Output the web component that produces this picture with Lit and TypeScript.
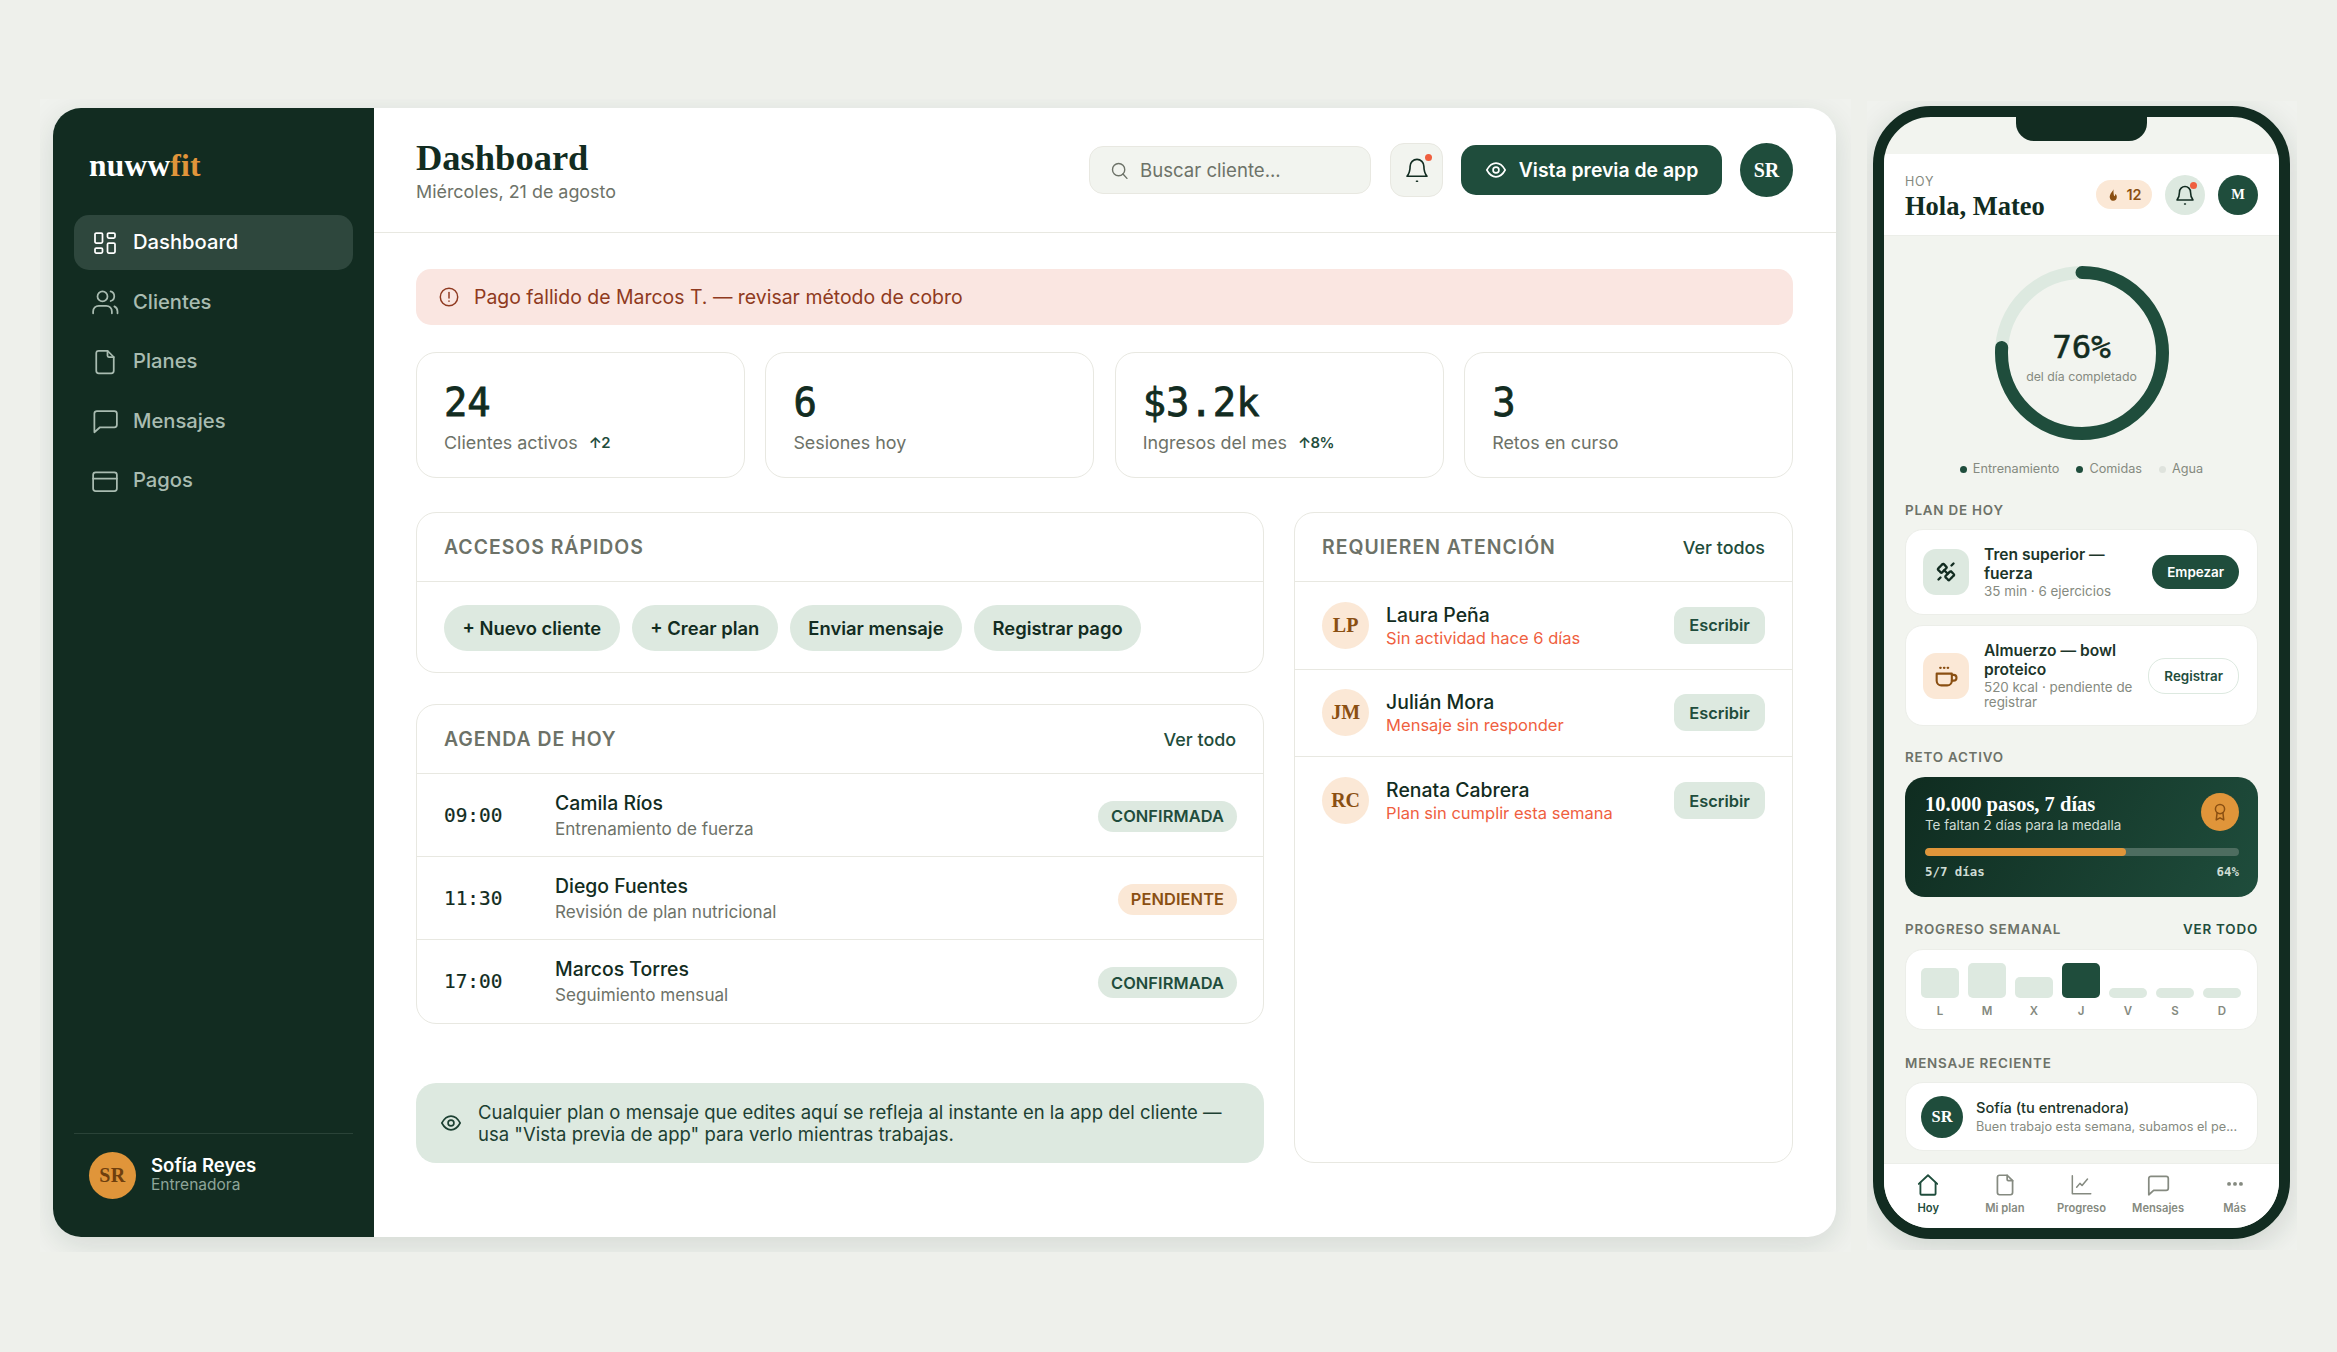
import { LitElement, html, css, svg } from 'lit';
import { customElement } from 'lit/decorators.js';

const SERIF = css`'Liberation Serif', serif`;
const MONO = css`'DejaVu Sans Mono', monospace`;

const icons = {
  dashboard: svg`<path d="M5 4h4a1 1 0 0 1 1 1v6a1 1 0 0 1-1 1H5a1 1 0 0 1-1-1V5a1 1 0 0 1 1-1"/><path d="M5 16h4a1 1 0 0 1 1 1v2a1 1 0 0 1-1 1H5a1 1 0 0 1-1-1v-2a1 1 0 0 1 1-1"/><path d="M15 12h4a1 1 0 0 1 1 1v6a1 1 0 0 1-1 1h-4a1 1 0 0 1-1-1v-6a1 1 0 0 1 1-1"/><path d="M15 4h4a1 1 0 0 1 1 1v2a1 1 0 0 1-1 1h-4a1 1 0 0 1-1-1V5a1 1 0 0 1 1-1"/>`,
  users: svg`<circle cx="10" cy="7.5" r="4"/><path d="M2.5 21v-1.5a4.5 4.5 0 0 1 4.5-4.5h6a4.5 4.5 0 0 1 4.5 4.5V21"/><path d="M16.5 3.5a4 4 0 0 1 0 7.7"/><path d="M22 21v-1.5a4.5 4.5 0 0 0-2.5-4"/>`,
  file: svg`<path d="M14 3v4a1 1 0 0 0 1 1h4"/><path d="M17 21H7a2 2 0 0 1-2-2V5a2 2 0 0 1 2-2h7l5 5v11a2 2 0 0 1-2 2z"/>`,
  message: svg`<path d="M3.5 21V6a2 2 0 0 1 2-2h14a2 2 0 0 1 2 2v9a2 2 0 0 1-2 2H8z"/>`,
  card: svg`<rect x="2.5" y="5" width="19" height="15" rx="2"/><path d="M2.5 10h19"/>`,
  search: svg`<circle cx="11" cy="11" r="7"/><path d="m20.5 21-4.500-5"/>`,
  bell: svg`<path d="M12 3.500a5.500 5.500 0 0 0-5.500 5.500c0 5-2.500 8-2.500 8h16s-2.500-3-2.500-8A5.500 5.500 0 0 0 12 3.500z"/><path d="M11.600 21h.8"/>`,
  eye: svg`<path d="M2 12c2.500-4.600 6-7.500 10-7.500s7.500 2.900 10 7.500c-2.500 4.600-6 7.500-10 7.500S4.500 16.600 2 12z"/><circle cx="12" cy="12" r="3.200"/>`,
  alert: svg`<circle cx="12" cy="12" r="9.500"/><path d="M12 7v6"/><path d="M12 16.400v.2"/>`,
  dumbbell: svg`<g transform="rotate(45 12 12)"><rect x="4" y="8" width="5.500" height="8" rx="1" stroke-dasharray="2.600 1"/><rect x="14.500" y="8" width="5.500" height="8" rx="1" stroke-dasharray="2.600 1"/><path d="M9.500 12h5"/></g><path d="M17.500 5.500l2-2M4.500 19.500l2-2"/>`,
  cup: svg`<path d="M4 10h13v6a4 4 0 0 1-4 4H8a4 4 0 0 1-4-4z"/><path d="M17 11h1.500a2.500 2.500 0 0 1 0 5H17"/><path d="M7 5h.5M10.200 5h.5M13.400 5h.5"/>`,
  medal: svg`<circle cx="12" cy="8.500" r="5.500"/><path d="M8.500 13l-1 8.500 4.500-2.500 4.500 2.500-1-8.500"/>`,
  home: svg`<path d="M3.500 11 12 3l8.500 8"/><path d="M5 9.800V20a1 1 0 0 0 1 1h12a1 1 0 0 0 1-1V9.800"/>`,
  chart: svg`<path d="M4 3.500V20h17"/><path d="m8 14 3-3.500 2 2 5-6"/>`,
};

function icon(name: keyof typeof icons, size: number, width = 1.8) {
  return html`<svg
    width=${size}
    height=${size}
    viewBox="0 0 24 24"
    fill="none"
    stroke="currentColor"
    stroke-width=${width}
    stroke-linecap="round"
    stroke-linejoin="round"
  >${icons[name]}</svg>`;
}

@customElement('dash-window')
class DashWindow extends LitElement {
  static styles = css`
    :host {
      display: flex;
      width: 1783px;
      height: 1129px;
      box-sizing: border-box;
      background: #fff;
      border-radius: 28px;
      overflow: hidden;
      color: #122c21;
      font-family: Inter, sans-serif;
      box-shadow: 0 8px 32px rgba(18, 44, 33, 0.13);
    }

    * {
      box-sizing: border-box;
    }

    svg {
      display: block;
      flex: none;
    }

    .side {
      width: 321px;
      flex: none;
      background: #122c21;
      display: flex;
      flex-direction: column;
      padding: 0 21px;
    }

    .logo {
      font: 700 31.500px/40px ${SERIF};
      color: #fff;
      margin: 38px 0 29px 15px;
      letter-spacing: 0.2px;
    }

    .logo span {
      color: #e0953a;
    }

    .nav {
      display: flex;
      flex-direction: column;
      gap: 4.600px;
      flex: 1;
    }

    .nav__item {
      display: flex;
      align-items: center;
      gap: 13.500px;
      height: 55px;
      padding-left: 15.500px;
      border-radius: 15px;
      font-size: 20.200px;
      font-weight: 500;
      color: #a9bcb1;
    }

    .nav__item span {
      padding-bottom: 2px;
    }

    .nav__item--active {
      background: #2e473d;
      color: #fff;
    }

    .coach {
      border-top: 1px solid #2a4338;
      display: flex;
      align-items: center;
      gap: 15px;
      padding: 18px 15px 38px;
    }

    .coach__avatar {
      width: 47px;
      height: 47px;
      border-radius: 50%;
      background: #e0953a;
      color: #6f3f0e;
      display: flex;
      align-items: center;
      justify-content: center;
      font: 700 20px ${SERIF};
      letter-spacing: 0.5px;
    }

    .coach__text {
      padding-bottom: 3px;
    }

    .coach__name {
      font-size: 18.600px;
      line-height: 22px;
      font-weight: 600;
      color: #fff;
    }

    .coach__role {
      font-size: 15.500px;
      line-height: 18px;
      color: #8ea599;
    }

    .main {
      flex: 1;
      min-width: 0;
      display: flex;
      flex-direction: column;
    }

    .top {
      height: 125px;
      flex: none;
      display: flex;
      align-items: center;
      padding: 0 43px 0 42px;
      border-bottom: 1px solid #e8e8e1;
    }

    .top__title {
      flex: 1;
    }

    h1 {
      margin: 0;
      font: 700 36.500px/44px ${SERIF};
      color: #122c21;
    }

    .top__date {
      font-size: 17.900px;
      line-height: 24px;
      color: #6d7268;
    }

    .search {
      width: 282px;
      height: 48px;
      border: 1px solid #e8e8e1;
      border-radius: 14px;
      background: #f2f4ef;
      display: flex;
      align-items: center;
      gap: 10px;
      padding-left: 19px;
      font-size: 18.600px;
      color: #6d7268;
      margin-right: 19px;
    }

    .bell {
      position: relative;
      width: 53px;
      height: 54px;
      border: 1px solid #e8e8e1;
      border-radius: 14px;
      background: #f2f4ef;
      display: flex;
      align-items: center;
      justify-content: center;
      margin-right: 18px;
    }

    .bell__dot {
      position: absolute;
      top: 10px;
      right: 10px;
      width: 7px;
      height: 7px;
      border-radius: 50%;
      background: #ef5f3f;
    }

    .preview {
      width: 261px;
      height: 50px;
      border-radius: 15px;
      background: #1f4d3c;
      color: #fff;
      display: flex;
      align-items: center;
      justify-content: center;
      gap: 12px;
      font-size: 19.400px;
      font-weight: 600;
      margin-right: 18px;
    }

    .me {
      width: 53px;
      height: 54px;
      border-radius: 50%;
      background: #1f4d3c;
      color: #fff;
      display: flex;
      align-items: center;
      justify-content: center;
      font: 700 20px ${SERIF};
    }

    .content {
      flex: 1;
      min-height: 0;
      display: flex;
      flex-direction: column;
      padding: 36px 43px 74px 42px;
    }

    .alert {
      height: 56px;
      flex: none;
      border-radius: 15px;
      background: #fae6e1;
      color: #8f3a20;
      display: flex;
      align-items: center;
      gap: 14px;
      padding-left: 22px;
      font-size: 19.450px;
    }

    .stats {
      display: grid;
      grid-template-columns: repeat(4, 1fr);
      gap: 20.500px;
      margin-top: 27px;
      flex: none;
    }

    .stat {
      height: 126px;
      border: 1px solid #e8e8e1;
      border-radius: 20px;
      padding: 26px 27px 0;
    }

    .stat__value {
      font: 400 38.800px/48px ${MONO};
      -webkit-text-stroke: 0.8px currentColor;
      color: #122c21;
    }

    .stat__label {
      display: flex;
      align-items: center;
      gap: 11px;
      margin-top: 3.500px;
      font-size: 17.900px;
      line-height: 24px;
      color: #6d7268;
    }

    .stat__delta {
      font-size: 14.900px;
      font-weight: 600;
      letter-spacing: -0.5px;
      color: #1f4d3c;
    }

    .columns {
      flex: 1;
      min-height: 0;
      margin-top: 34px;
      display: grid;
      grid-template-columns: 1.7fr 1fr;
      gap: 30px;
    }

    .left {
      display: flex;
      flex-direction: column;
    }

    .panel {
      border: 1px solid #e8e8e1;
      border-radius: 20px;
      flex: none;
    }

    .panel__head {
      height: 69px;
      display: flex;
      align-items: center;
      justify-content: space-between;
      padding: 0 27px;
      border-bottom: 1px solid #e8e8e1;
    }

    .panel__title {
      font-size: 19.400px;
      font-weight: 600;
      letter-spacing: 1px;
      color: #6d7268;
    }

    .panel__link {
      font-size: 17.900px;
      font-weight: 500;
      color: #1f4d3c;
    }

    .chips {
      display: flex;
      gap: 12px;
      padding: 23px 27px 21px;
    }

    .chip {
      height: 46px;
      padding: 0 18.500px;
      border-radius: 23px;
      background: #dde9e0;
      display: flex;
      align-items: center;
      font-size: 18.400px;
      font-weight: 600;
      color: #122c21;
    }

    .agenda {
      margin-top: 31px;
    }

    .slot {
      height: 83px;
      display: flex;
      align-items: center;
      padding: 0 26px 0 27px;
      border-bottom: 1px solid #e8e8e1;
    }

    .slot:last-child {
      border-bottom: 0;
    }

    .slot__time {
      width: 111px;
      flex: none;
      font: 400 19.400px ${MONO};
      -webkit-text-stroke: 0.2px currentColor;
      color: #122c21;
    }

    .slot__body {
      flex: 1;
      padding-top: 1px;
    }

    .slot__name {
      font-size: 19.400px;
      line-height: 25px;
      font-weight: 500;
      color: #122c21;
    }

    .slot__type {
      font-size: 17.100px;
      line-height: 25px;
      color: #6d7268;
    }

    .badge {
      height: 31px;
      margin-top: 2px;
      display: flex;
      align-items: center;
      padding: 0 13px;
      border-radius: 16px;
      font-size: 16.400px;
      font-weight: 600;
      letter-spacing: 0.1px;
      background: #dde9e0;
      color: #1f4d3c;
    }

    .badge--wait {
      background: #fbe8d6;
      color: #8a4f12;
    }

    .hint {
      margin-top: auto;
      height: 80px;
      flex: none;
      border-radius: 20px;
      background: #dde9e0;
      display: flex;
      align-items: center;
      gap: 16px;
      padding: 0 24px;
      font-size: 18.500px;
      line-height: 22.500px;
      color: #1c4032;
    }

    .right {
      height: 100%;
    }

    .person {
      height: 87.500px;
      display: flex;
      align-items: center;
      padding: 0 27px;
      border-bottom: 1px solid #e8e8e1;
    }

    .person:last-child {
      border-bottom: 0;
    }

    .person__avatar {
      width: 47px;
      height: 47px;
      flex: none;
      border-radius: 50%;
      background: #fbe8d6;
      color: #8a4f12;
      display: flex;
      align-items: center;
      justify-content: center;
      font: 700 20px ${SERIF};
      margin-right: 17px;
    }

    .person__body {
      flex: 1;
      padding-top: 3px;
    }

    .person__name {
      font-size: 19.400px;
      line-height: 23px;
      font-weight: 500;
      color: #122c21;
    }

    .person__note {
      font-size: 16.500px;
      line-height: 23px;
      color: #ef5f3f;
    }

    .write {
      width: 91px;
      height: 37px;
      border-radius: 12px;
      background: #dde9e0;
      color: #1f4d3c;
      display: flex;
      align-items: center;
      justify-content: center;
      font-size: 16.400px;
      font-weight: 600;
    }
  `;

  render() {
    const nav: [keyof typeof icons, string][] = [
      ['dashboard', 'Dashboard'],
      ['users', 'Clientes'],
      ['file', 'Planes'],
      ['message', 'Mensajes'],
      ['card', 'Pagos'],
    ];
    const stats = [
      ['24', 'Clientes activos', '↑2'],
      ['6', 'Sesiones hoy', ''],
      ['$3.2k', 'Ingresos del mes', '↑8%'],
      ['3', 'Retos en curso', ''],
    ];
    const slots = [
      ['09:00', 'Camila Ríos', 'Entrenamiento de fuerza', 'CONFIRMADA'],
      ['11:30', 'Diego Fuentes', 'Revisión de plan nutricional', 'PENDIENTE'],
      ['17:00', 'Marcos Torres', 'Seguimiento mensual', 'CONFIRMADA'],
    ];
    const people = [
      ['LP', 'Laura Peña', 'Sin actividad hace 6 días'],
      ['JM', 'Julián Mora', 'Mensaje sin responder'],
      ['RC', 'Renata Cabrera', 'Plan sin cumplir esta semana'],
    ];

    return html`
      <aside class="side">
        <div class="logo">nuww<span>fit</span></div>
        <nav class="nav">
          ${nav.map(
            ([name, label], i) => html`
              <div class="nav__item ${i === 0 ? 'nav__item--active' : ''}">${icon(name, 30, 1.4)}<span>${label}</span></div>
            `,
          )}
        </nav>
        <div class="coach">
          <div class="coach__avatar">SR</div>
          <div class="coach__text">
            <div class="coach__name">Sofía Reyes</div>
            <div class="coach__role">Entrenadora</div>
          </div>
        </div>
      </aside>
      <div class="main">
        <header class="top">
          <div class="top__title">
            <h1>Dashboard</h1>
            <div class="top__date">Miércoles, 21 de agosto</div>
          </div>
          <div class="search">${icon('search', 21, 1.6)}Buscar cliente...</div>
          <div class="bell">${icon('bell', 30, 1.3)}<span class="bell__dot"></span></div>
          <div class="preview">${icon('eye', 22)}Vista previa de app</div>
          <div class="me">SR</div>
        </header>
        <div class="content">
          <div class="alert">${icon('alert', 22, 1.6)}Pago fallido de Marcos T. — revisar método de cobro</div>
          <div class="stats">
            ${stats.map(
              ([value, label, delta]) => html`
                <div class="stat">
                  <div class="stat__value">${value}</div>
                  <div class="stat__label">${label}${delta ? html`<span class="stat__delta">${delta}</span>` : ''}</div>
                </div>
              `,
            )}
          </div>
          <div class="columns">
            <div class="left">
              <section class="panel">
                <div class="panel__head"><span class="panel__title">ACCESOS RÁPIDOS</span></div>
                <div class="chips">
                  ${['+ Nuevo cliente', '+ Crear plan', 'Enviar mensaje', 'Registrar pago'].map(
                    (c) => html`<span class="chip">${c}</span>`,
                  )}
                </div>
              </section>
              <section class="panel agenda">
                <div class="panel__head">
                  <span class="panel__title">AGENDA DE HOY</span><span class="panel__link">Ver todo</span>
                </div>
                ${slots.map(
                  ([time, name, type, status]) => html`
                    <div class="slot">
                      <div class="slot__time">${time}</div>
                      <div class="slot__body">
                        <div class="slot__name">${name}</div>
                        <div class="slot__type">${type}</div>
                      </div>
                      <span class="badge ${status === 'PENDIENTE' ? 'badge--wait' : ''}">${status}</span>
                    </div>
                  `,
                )}
              </section>
              <div class="hint">
                ${icon('eye', 22)}
                <div>
                  Cualquier plan o mensaje que edites aquí se refleja al instante en la app del cliente — usa "Vista
                  previa de app" para verlo mientras trabajas.
                </div>
              </div>
            </div>
            <section class="panel right">
              <div class="panel__head">
                <span class="panel__title">REQUIEREN ATENCIÓN</span><span class="panel__link">Ver todos</span>
              </div>
              ${people.map(
                ([initials, name, note]) => html`
                  <div class="person">
                    <div class="person__avatar">${initials}</div>
                    <div class="person__body">
                      <div class="person__name">${name}</div>
                      <div class="person__note">${note}</div>
                    </div>
                    <div class="write">Escribir</div>
                  </div>
                `,
              )}
            </section>
          </div>
        </div>
      </div>
    `;
  }
}

@customElement('phone-preview')
class PhonePreview extends LitElement {
  static styles = css`
    :host {
      display: block;
      position: relative;
      width: 417px;
      height: 1133px;
      box-sizing: border-box;
      border: 11px solid #122c21;
      border-radius: 58px;
      background: #f2f4ef;
      overflow: hidden;
      color: #122c21;
      font-family: Inter, sans-serif;
      box-shadow: 0 8px 32px rgba(18, 44, 33, 0.16);
    }

    * {
      box-sizing: border-box;
    }

    svg {
      display: block;
      flex: none;
    }

    .screen {
      height: 100%;
      display: flex;
      flex-direction: column;
    }

    .notch {
      position: absolute;
      top: 0;
      left: 132px;
      width: 131px;
      height: 24px;
      background: #122c21;
      border-radius: 0 0 18px 18px;
    }

    .bar {
      height: 82px;
      flex: none;
      margin-top: 37px;
      background: #fff;
      border-bottom: 1px solid #eceee9;
      display: flex;
      align-items: center;
      padding: 0 21px;
    }

    .bar__hello {
      flex: 1;
      padding-top: 7px;
    }

    .bar__day {
      font-size: 12.500px;
      line-height: 15px;
      letter-spacing: 0.8px;
      color: #858a80;
    }

    .bar__name {
      font: 700 26.500px/31px ${SERIF};
      margin-top: 2px;
      color: #122c21;
    }

    .streak {
      width: 56px;
      height: 29px;
      border-radius: 15px;
      background: #fbe8d6;
      color: #8a4f12;
      display: flex;
      align-items: center;
      justify-content: center;
      gap: 6px;
      font-size: 14.400px;
      font-weight: 600;
      margin-right: 13px;
    }

    .bar__bell {
      position: relative;
      width: 40px;
      height: 40px;
      border-radius: 50%;
      background: #dde9e0;
      display: flex;
      align-items: center;
      justify-content: center;
      margin-right: 13px;
    }

    .bar__dot {
      position: absolute;
      top: 7px;
      right: 8px;
      width: 7px;
      height: 7px;
      border-radius: 50%;
      background: #ef5f3f;
    }

    .bar__me,
    .msg__avatar {
      border-radius: 50%;
      background: #1f4d3c;
      color: #fff;
      display: flex;
      align-items: center;
      justify-content: center;
      flex: none;
      font-family: ${SERIF};
      font-weight: 700;
    }

    .bar__me {
      width: 40px;
      height: 40px;
      font-size: 14.400px;
    }

    .body {
      flex: 1;
      min-height: 0;
      overflow: hidden;
      padding: 30px 21px 0 21px;
    }

    .ring {
      position: relative;
      width: 174px;
      height: 174px;
      margin: 0 auto;
    }

    .ring__text {
      position: absolute;
      inset: 0;
      padding-top: 6px;
      display: flex;
      flex-direction: column;
      align-items: center;
      justify-content: center;
    }

    .ring__value {
      font: 400 32.500px/38px ${MONO};
      -webkit-text-stroke: 0.5px currentColor;
      color: #122c21;
    }

    .ring__label {
      font-size: 12.300px;
      line-height: 17px;
      margin-top: 2px;
      color: #858a80;
    }

    .legend {
      display: flex;
      justify-content: center;
      gap: 17px;
      margin-top: 21px;
      font-size: 12.700px;
      line-height: 16px;
      color: #858a80;
    }

    .legend span {
      display: flex;
      align-items: center;
      gap: 6px;
    }

    .legend i {
      width: 7px;
      height: 7px;
      border-radius: 50%;
      background: #1f4d3c;
    }

    .legend i.off {
      background: #dfe3dd;
    }

    .label {
      display: flex;
      justify-content: space-between;
      height: 18px;
      align-items: center;
      font-size: 13.400px;
      font-weight: 600;
      letter-spacing: 0.8px;
      color: #6d7268;
      margin-bottom: 11px;
    }

    .label--plan {
      margin-top: 24px;
      margin-bottom: 10px;
    }

    .label--top {
      margin-top: 22px;
    }

    .label--msg {
      margin-bottom: 10px;
    }

    .label a {
      color: #1f4d3c;
    }

    .card {
      background: #fff;
      border: 1px solid #eceee9;
      border-radius: 18px;
    }

    .plan {
      display: flex;
      align-items: center;
      padding: 15px 18px 15px 17px;
      margin-bottom: 10px;
    }

    .plan__icon {
      width: 46px;
      height: 46px;
      flex: none;
      border-radius: 13px;
      display: flex;
      align-items: center;
      justify-content: center;
      background: #dde9e0;
      color: #122c21;
      margin-right: 15px;
    }

    .plan__icon--food {
      background: #fbe8d6;
      color: #8a4f12;
    }

    .plan__text {
      flex: 1;
      min-width: 0;
      margin-right: 12px;
    }

    .plan__title {
      font-size: 15.600px;
      line-height: 19px;
      font-weight: 600;
      color: #1c3529;
    }

    .plan__sub {
      font-size: 13.400px;
      line-height: 15px;
      margin-top: 1px;
      color: #858a80;
    }

    .btn {
      flex: none;
      height: 34px;
      padding: 0 15px;
      border-radius: 17px;
      background: #1f4d3c;
      color: #fff;
      display: flex;
      align-items: center;
      font-size: 13.400px;
      font-weight: 600;
    }

    .btn--ghost {
      height: 36px;
      background: #fff;
      border: 1px solid #dde9e0;
      color: #1f4d3c;
    }

    .challenge {
      height: 120px;
      border-radius: 20px;
      background: linear-gradient(120deg, #0f2c20, #1f4d3c);
      color: #fff;
      padding: 15px 19px 0 20px;
      margin-bottom: 23px;
    }

    .challenge__row {
      display: flex;
      justify-content: space-between;
    }

    .challenge__title {
      font: 700 20.500px/24px ${SERIF};
    }

    .challenge__sub {
      font-size: 13.400px;
      line-height: 17px;
      margin-top: 1px;
      color: #cfdcd4;
    }

    .medal {
      width: 38px;
      height: 38px;
      margin-top: 1px;
      border-radius: 50%;
      background: #e0953a;
      color: #8a4f12;
      display: flex;
      align-items: center;
      justify-content: center;
    }

    .track {
      height: 8px;
      margin-top: 14px;
      border-radius: 4px;
      background: #4e6d60;
      overflow: hidden;
    }

    .track div {
      height: 100%;
      border-radius: 4px;
      background: #e0953a;
    }

    .challenge__foot {
      display: flex;
      justify-content: space-between;
      margin-top: 8px;
      font: 700 12.400px/16px ${MONO};
      color: #cfdcd4;
    }

    .week {
      display: flex;
      gap: 9px;
      padding: 13px 15px 11px;
      margin-bottom: 24px;
    }

    .day {
      width: 38px;
      display: flex;
      flex-direction: column;
      align-items: stretch;
    }

    .day__slot {
      height: 35px;
      display: flex;
      align-items: flex-end;
    }

    .day__bar {
      width: 100%;
      background: #dde9e0;
      border-radius: 5px;
    }

    .day__bar--on {
      background: #1f4d3c;
    }

    .day__name {
      margin-top: 6px;
      text-align: center;
      font-size: 11.500px;
      line-height: 14px;
      font-weight: 600;
      color: #858a80;
    }

    .msg {
      height: 69px;
      display: flex;
      align-items: center;
      gap: 13px;
      padding: 0 15px;
    }

    .msg__avatar {
      width: 42px;
      height: 42px;
      font-size: 16.400px;
    }

    .msg__body {
      flex: 1;
      min-width: 0;
    }

    .msg__name {
      font-size: 14.600px;
      line-height: 19px;
      font-weight: 500;
      color: #1c3529;
    }

    .msg__text {
      font-size: 12.700px;
      line-height: 17px;
      color: #858a80;
      white-space: nowrap;
    }

    .tabs {
      height: 65px;
      flex: none;
      background: #fff;
      border-top: 1px solid #eceee9;
      display: grid;
      grid-template-columns: repeat(5, 1fr);
      padding: 0 6px;
    }

    .tab {
      display: flex;
      flex-direction: column;
      align-items: center;
      padding-top: 8px;
      gap: 2px;
      font-size: 11.200px;
      line-height: 16px;
      font-weight: 600;
      color: #858a80;
    }

    .tab--on {
      color: #1f4d3c;
    }
  `;

  render() {
    const r = 80.5;
    const len = 2 * Math.PI * r;
    const bars = [
      ['L', 30],
      ['M', 35],
      ['X', 21],
      ['J', 35],
      ['V', 10],
      ['S', 10],
      ['D', 10],
    ] as const;

    return html`
      <div class="screen">
        <div class="bar">
          <div class="bar__hello">
            <div class="bar__day">HOY</div>
            <div class="bar__name">Hola, Mateo</div>
          </div>
          <div class="streak">
            <svg width="14" height="14" viewBox="0 0 24 24" fill="currentColor">
              <path d="M13 2c-.5 3-5.500 6-6.500 11.500C5.800 18.500 9 22 12.500 22s6.500-3 6-7.500c-.3-2-1.500-3.500-2.500-4.500.2 2-.5 3.500-2 4-1-3.500-1.500-8-1-12z" />
            </svg>
            12
          </div>
          <div class="bar__bell">${icon('bell', 24, 1.6)}<span class="bar__dot"></span></div>
          <div class="bar__me">M</div>
        </div>
        <div class="body">
          <div class="ring">
            <svg width="174" height="174" viewBox="0 0 174 174" fill="none" stroke-width="13">
              <circle cx="87" cy="87" r=${r} stroke="#dde9e0" />
              <circle
                cx="87"
                cy="87"
                r=${r}
                stroke="#1f4d3c"
                stroke-linecap="round"
                stroke-dasharray="${len * 0.76} ${len}"
                transform="rotate(-90 87 87)"
              />
            </svg>
            <div class="ring__text">
              <div class="ring__value">76%</div>
              <div class="ring__label">del día completado</div>
            </div>
          </div>
          <div class="legend">
            <span><i></i>Entrenamiento</span>
            <span><i></i>Comidas</span>
            <span><i class="off"></i>Agua</span>
          </div>

          <div class="label label--plan">PLAN DE HOY</div>
          <div class="card plan">
            <div class="plan__icon">${icon('dumbbell', 24, 2.4)}</div>
            <div class="plan__text">
              <div class="plan__title">Tren superior — fuerza</div>
              <div class="plan__sub">35 min · 6 ejercicios</div>
            </div>
            <div class="btn">Empezar</div>
          </div>
          <div class="card plan">
            <div class="plan__icon plan__icon--food">${icon('cup', 28, 1.8)}</div>
            <div class="plan__text">
              <div class="plan__title">Almuerzo — bowl proteico</div>
              <div class="plan__sub">520 kcal · pendiente de registrar</div>
            </div>
            <div class="btn btn--ghost">Registrar</div>
          </div>

          <div class="label label--top">RETO ACTIVO</div>
          <div class="challenge">
            <div class="challenge__row">
              <div>
                <div class="challenge__title">10.000 pasos, 7 días</div>
                <div class="challenge__sub">Te faltan 2 días para la medalla</div>
              </div>
              <div class="medal">${icon('medal', 20, 1.8)}</div>
            </div>
            <div class="track"><div style="width: 64%"></div></div>
            <div class="challenge__foot"><span>5/7 días</span><span>64%</span></div>
          </div>

          <div class="label">PROGRESO SEMANAL<a>VER TODO</a></div>
          <div class="card week">
            ${bars.map(
              ([name, h]) => html`
                <div class="day">
                  <div class="day__slot">
                    <div class="day__bar ${name === 'J' ? 'day__bar--on' : ''}" style="height: ${h}px"></div>
                  </div>
                  <div class="day__name">${name}</div>
                </div>
              `,
            )}
          </div>

          <div class="label label--msg">MENSAJE RECIENTE</div>
          <div class="card msg">
            <div class="msg__avatar">SR</div>
            <div class="msg__body">
              <div class="msg__name">Sofía (tu entrenadora)</div>
              <div class="msg__text">Buen trabajo esta semana, subamos el pe...</div>
            </div>
          </div>
        </div>
        <div class="tabs">
          <div class="tab tab--on">${icon('home', 26, 1.7)}Hoy</div>
          <div class="tab">${icon('file', 26, 1.6)}Mi plan</div>
          <div class="tab">${icon('chart', 26, 1.4)}Progreso</div>
          <div class="tab">${icon('message', 26, 1.6)}Mensajes</div>
          <div class="tab">
            <svg width="26" height="26" viewBox="0 0 24 24" fill="currentColor">
              <circle cx="6.500" cy="11" r="1.800" /><circle cx="12" cy="11" r="1.800" /><circle cx="17.500" cy="11" r="1.800" />
            </svg>
            Más
          </div>
        </div>
      </div>
      <div class="notch"></div>
    `;
  }
}

@customElement('app-root')
class AppRoot extends LitElement {
  static styles = css`
    :host {
      display: flex;
      gap: 16px;
      width: 2337px;
      height: 1352px;
      box-sizing: border-box;
      padding: 99px 0 0 40px;
      background: #eef0eb;
      overflow: hidden;
    }

    .frame {
      background: #f0f2ee;
      overflow: hidden;
      align-self: flex-start;
    }

    .frame--desk {
      padding: 9px 15px 15px 13px;
    }

    .frame--phone {
      margin-top: 2px;
      padding: 5px 7px 11px 6px;
    }
  `;

  render() {
    return html`
      <div class="frame frame--desk"><dash-window></dash-window></div>
      <div class="frame frame--phone"><phone-preview></phone-preview></div>
    `;
  }
}
